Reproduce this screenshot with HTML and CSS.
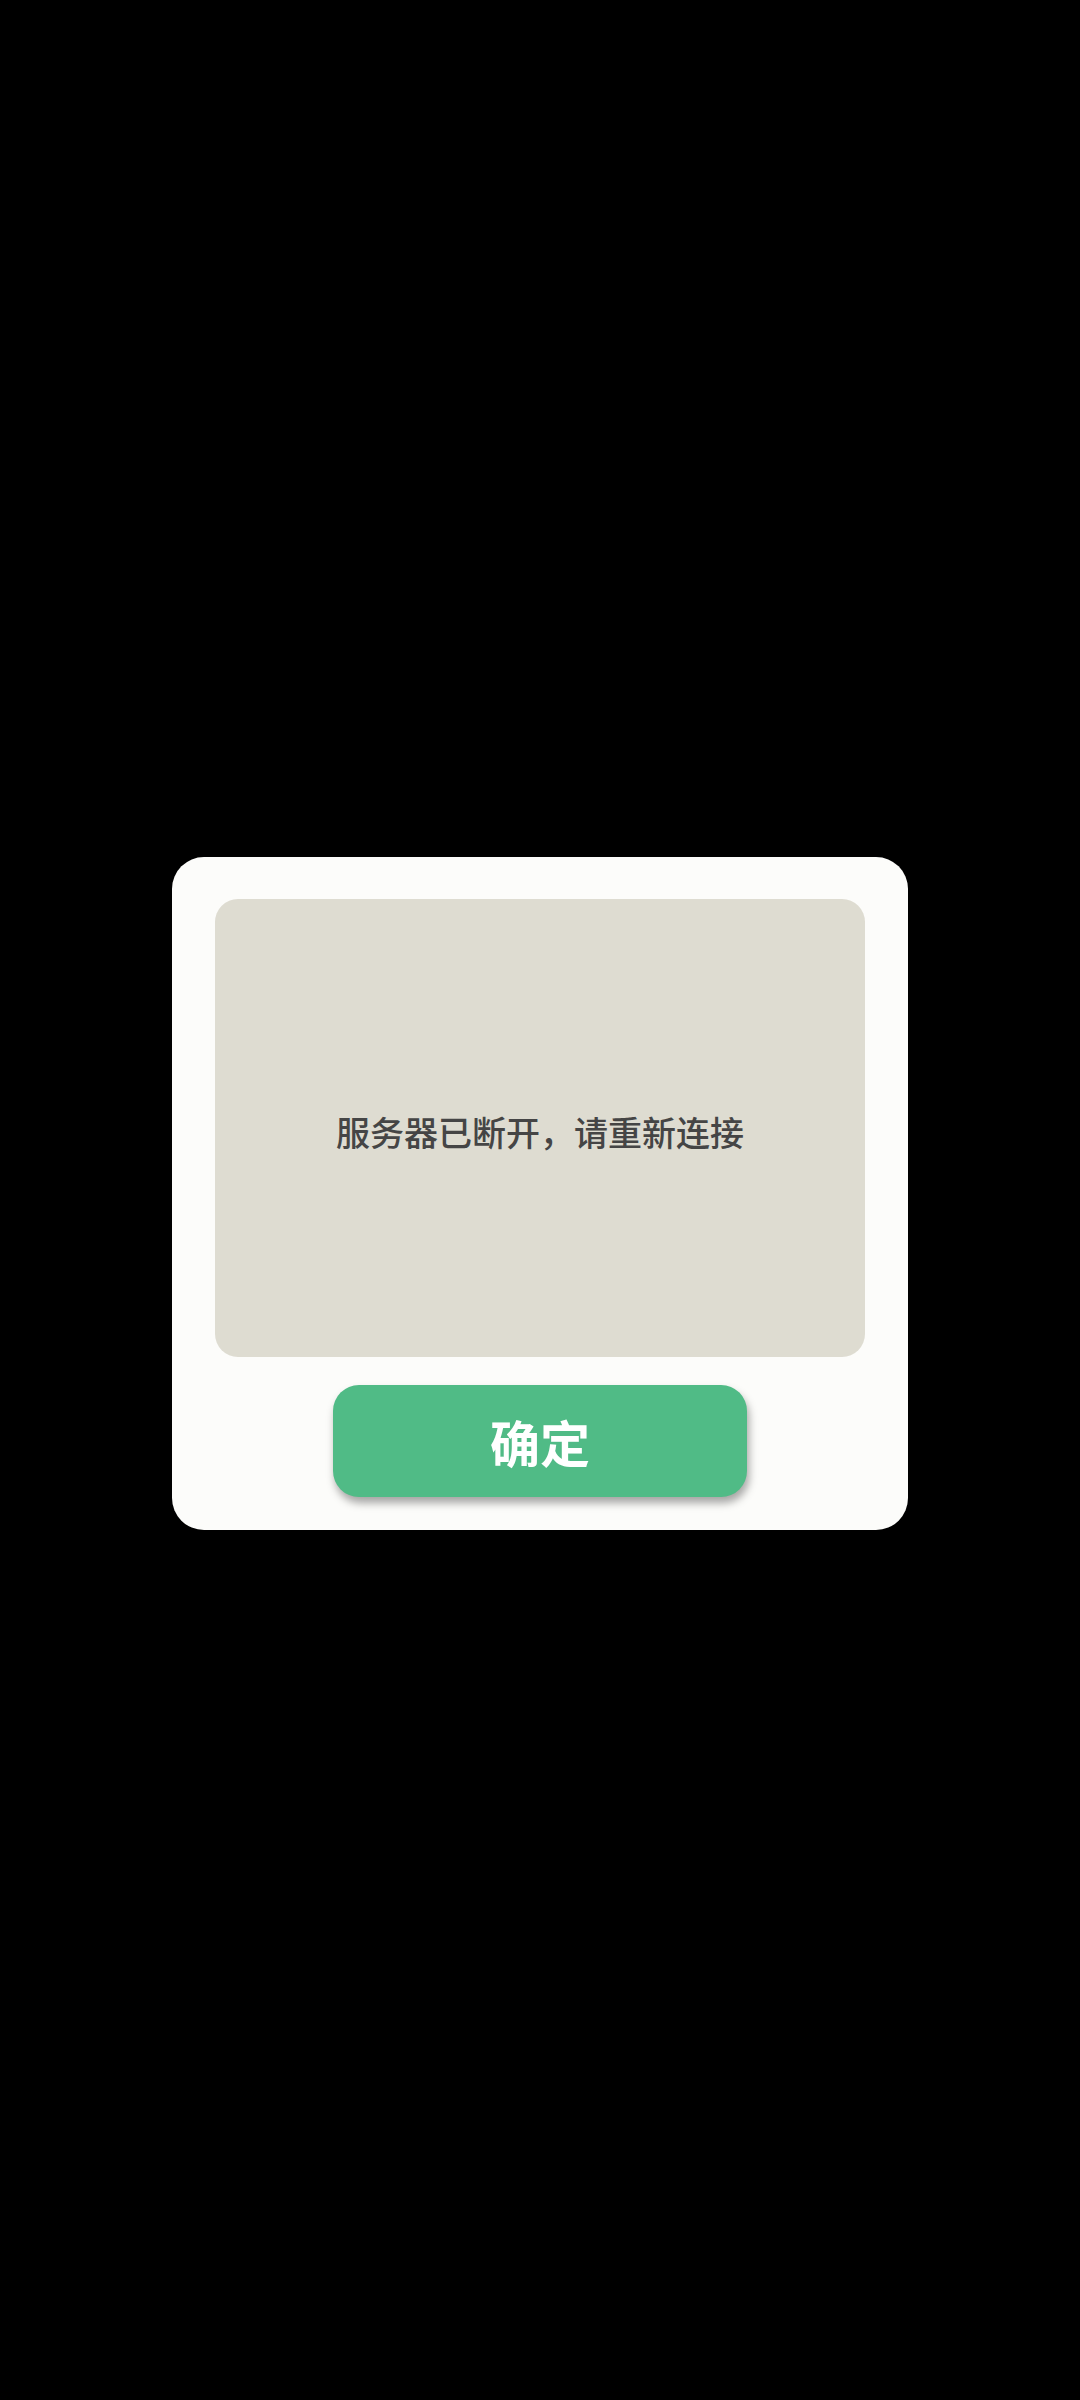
FILE: index.html
```html
<!DOCTYPE html>
<html lang="zh">
<head>
<meta charset="utf-8">
<link rel="stylesheet" href="styles.css">
</head>
<body>
<div class="screen">
  <div class="dialog">
    <div class="message">
      <p class="message-text">服务器已断开，请重新连接</p>
    </div>
    <button class="confirm">确定</button>
  </div>
</div>
</body>
</html>
```

FILE: styles.css
```css
html, body {
  margin: 0;
  padding: 0;
  background: #000;
}
.screen {
  width: 1080px;
  height: 2400px;
  display: flex;
  justify-content: center;
  padding-top: 857px;
  box-sizing: border-box;
  font-family: "Noto Sans CJK SC", "Noto Sans", sans-serif;
}
.dialog {
  width: 736px;
  height: 673px;
  box-sizing: border-box;
  background: #fcfcfa;
  border-radius: 32px;
  padding: 42px 43px 33px;
  display: flex;
  flex-direction: column;
  align-items: center;
}
.message {
  width: 650px;
  height: 458px;
  background: #dedcd1;
  border-radius: 23px;
  display: flex;
  align-items: center;
  justify-content: center;
}
.message-text {
  margin: 6px 0 0;
  font-size: 34px;
  font-weight: 500;
  color: #454545;
}
.confirm {
  margin-top: 28px;
  width: 414px;
  height: 112px;
  border: none;
  border-radius: 26px;
  background: #50bb86;
  color: #fff;
  font-family: "Noto Sans CJK SC", "Noto Sans", sans-serif;
  font-size: 50px;
  font-weight: 700;
  box-shadow: 2px 6px 8px rgba(0, 0, 0, 0.35);
  padding: 0;
}
```
